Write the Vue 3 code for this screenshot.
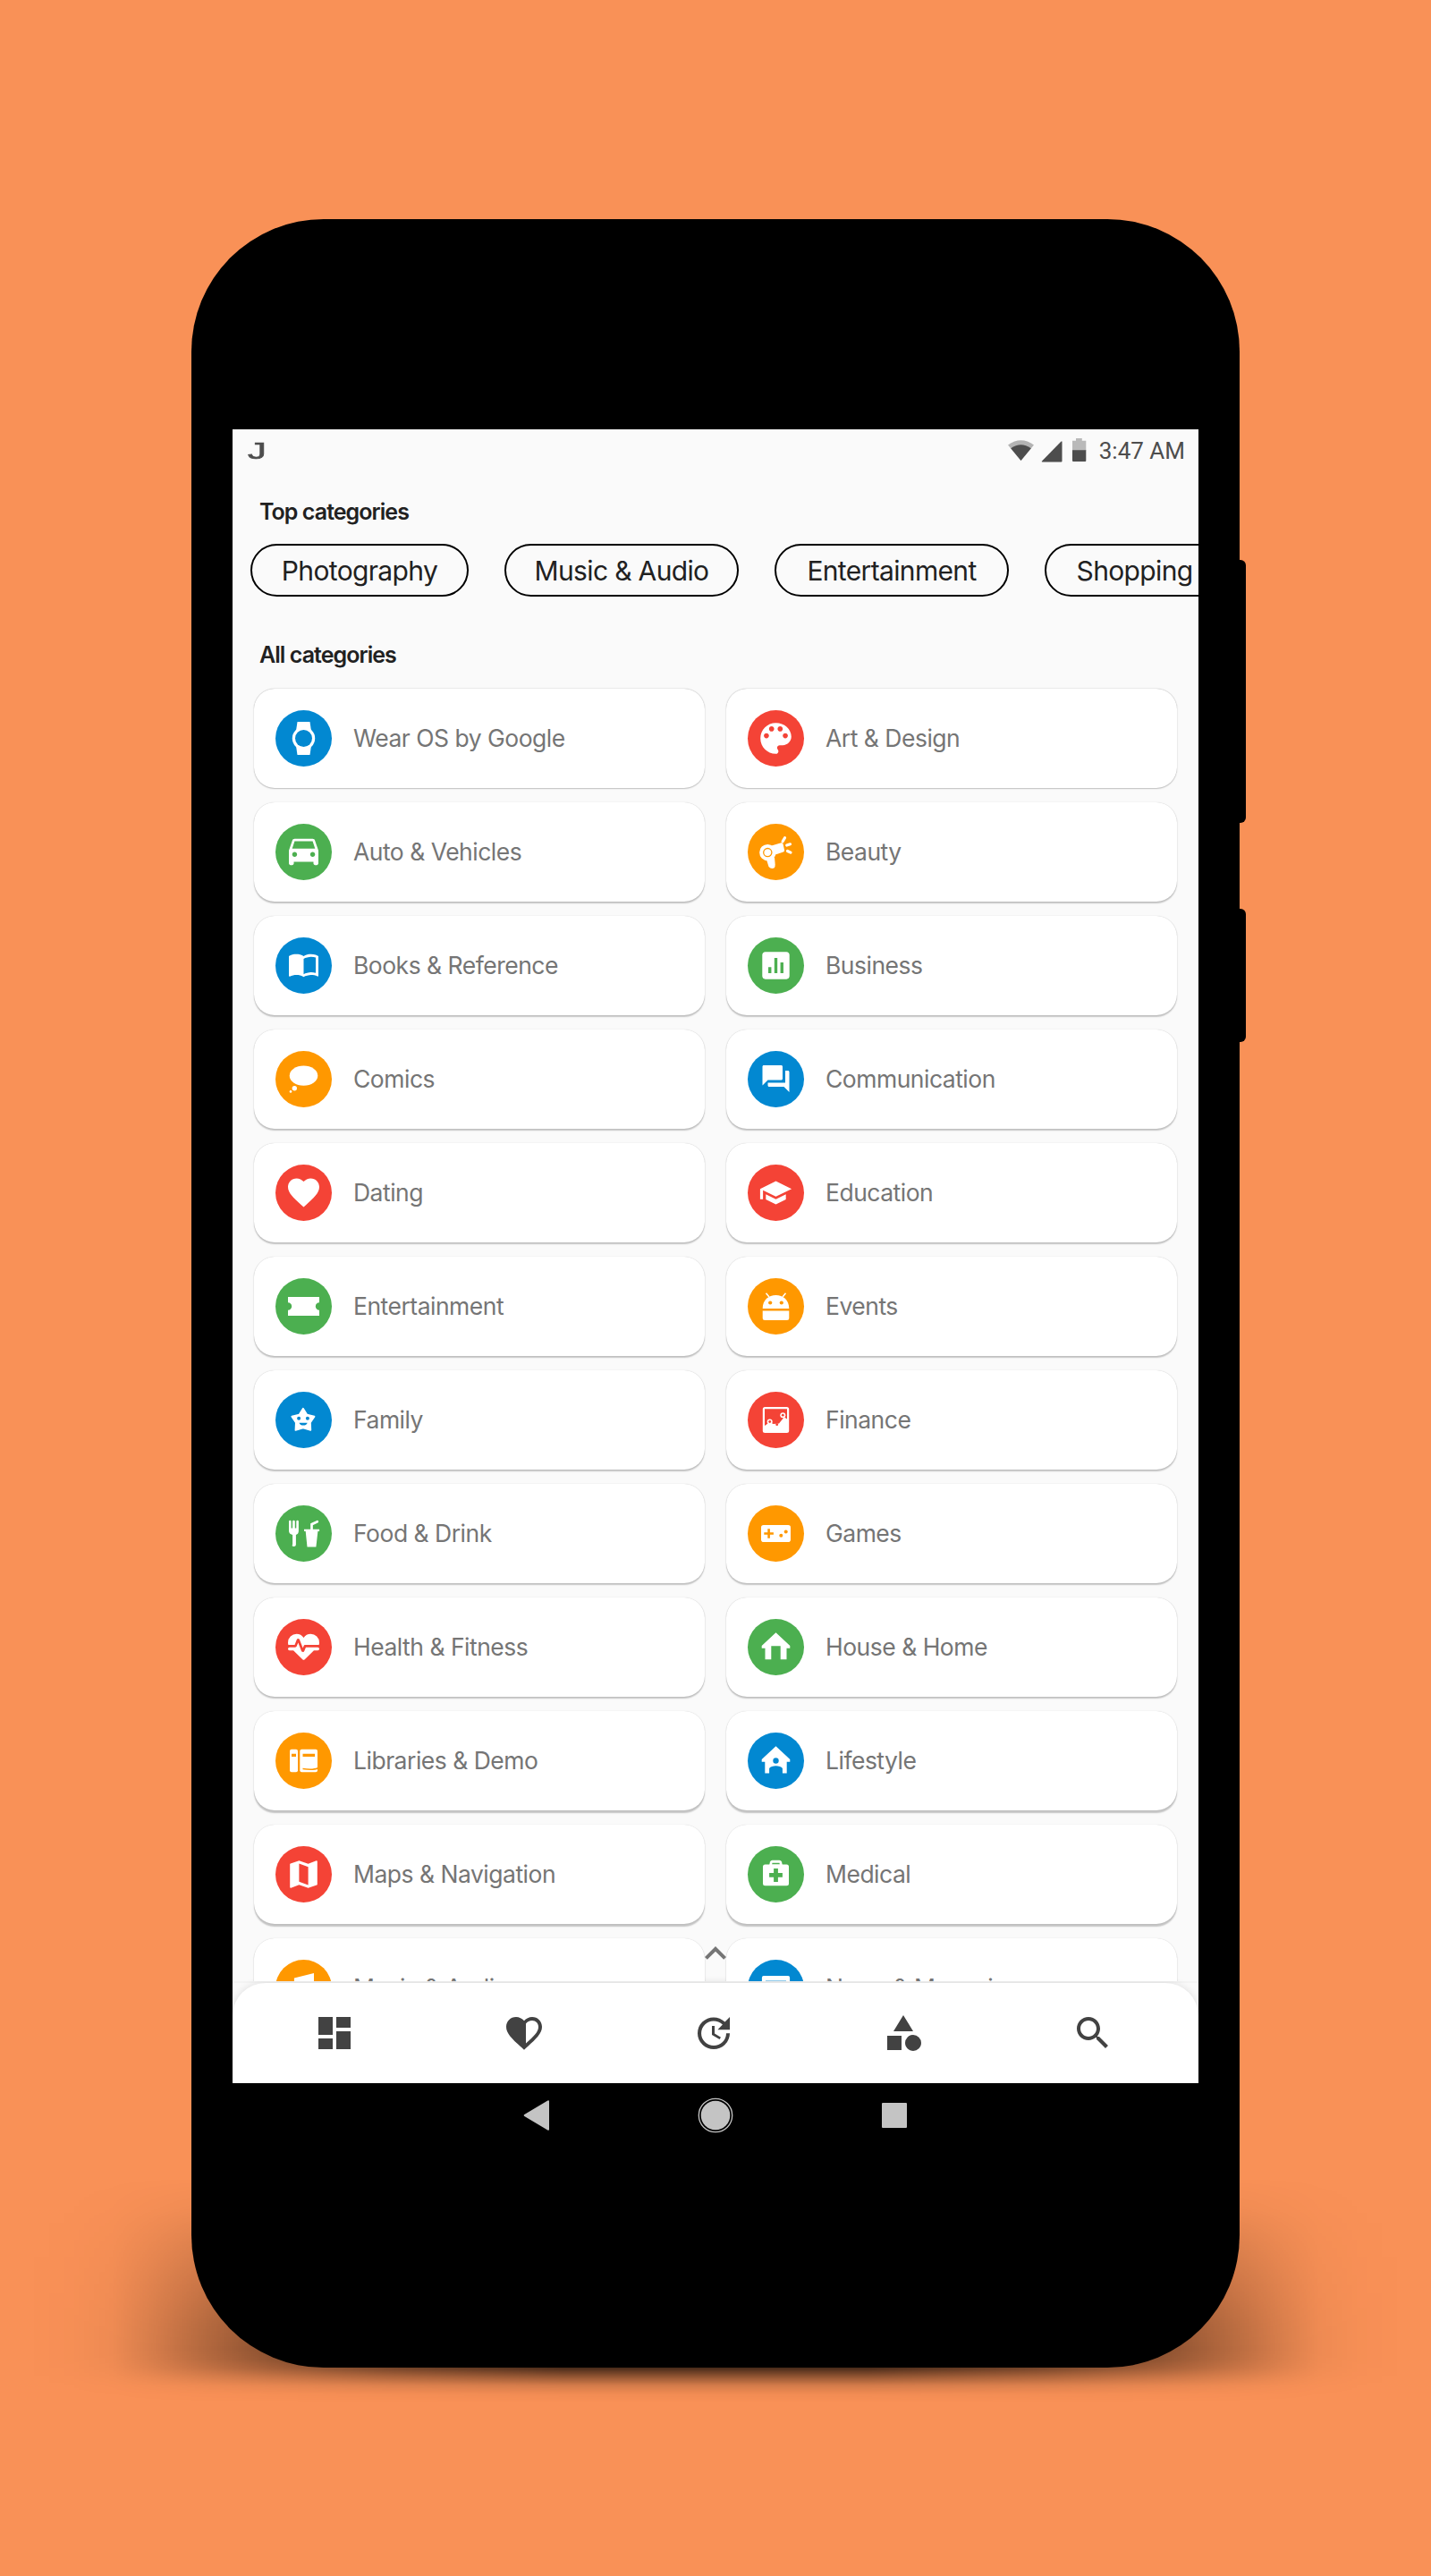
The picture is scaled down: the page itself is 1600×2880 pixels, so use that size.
<script setup>
const BLUE = '#0288d1'
const RED = '#f44336'
const GREEN = '#4caf50'
const ORANGE = '#ff9800'

const topCategories = [
  { label: 'Photography', width: 244 },
  { label: 'Music & Audio', width: 262 },
  { label: 'Entertainment', width: 262 },
  { label: 'Shopping', width: 201 },
]

// Glyphs are drawn around (0, 0); currentColor is the badge colour.
const icons = {
  watch:
    '<path d="M-7-18.5H7L8.4-9V9L7 18.5H-7L-8.4 9V-9z"/><circle r="12.7"/><circle r="9.5" fill="currentColor"/>',
  palette:
    '<path transform="scale(1.92) translate(-12 -12)" d="M12 3c-4.970 0-9 4.030-9 9s4.030 9 9 9c.83 0 1.500-.67 1.500-1.500 0-.39-.15-.74-.39-1.010-.23-.26-.38-.61-.38-.99 0-.83.67-1.500 1.500-1.500H16c2.760 0 5-2.240 5-5 0-4.420-4.030-8-9-8zm-5.500 9c-.83 0-1.500-.67-1.500-1.500S5.670 9 6.500 9 8 9.670 8 10.500 7.330 12 6.500 12zm3-4C8.670 8 8 7.330 8 6.500S8.670 5 9.500 5s1.500.67 1.500 1.500S10.330 8 9.500 8zm5 0c-.83 0-1.500-.67-1.500-1.500S13.670 5 14.500 5s1.500.67 1.500 1.500S15.330 8 14.500 8zm3 4c-.83 0-1.500-.67-1.500-1.500S16.670 9 17.500 9s1.500.67 1.500 1.500-.67 1.500-1.500 1.500z"/>',
  car:
    '<path transform="scale(1.83) translate(-12 -13)" d="M18.92 6.01C18.72 5.42 18.16 5 17.5 5h-11c-.66 0-1.21.42-1.42 1.01L3 12v8c0 .55.45 1 1 1h1c.55 0 1-.45 1-1v-1h12v1c0 .55.45 1 1 1h1c.55 0 1-.45 1-1v-8l-2.080-5.990zM6.500 16c-.83 0-1.500-.67-1.500-1.500S5.670 13 6.500 13s1.500.67 1.500 1.500S7.330 16 6.500 16zm11 0c-.83 0-1.500-.67-1.500-1.500s.67-1.500 1.500-1.500 1.500.67 1.500 1.500-.67 1.500-1.500 1.500zM5 11l1.500-4.500h11L19 11H5z"/>',
  dryer:
    '<circle cx="-9.200" cy="0.600" r="9.200"/><path d="M-5-7L6-10.300q1.500-.3 2 1.200L9.600-2q.2 1.500-1.200 1.900L-2 3.500z"/><path d="M-11 7L-8 16.500q2.500 2.800 6 1.500q1.400-1.500 1.200-4L-1.500 6z"/><circle cx="-9.200" cy="0.600" r="4.600" fill="none" stroke="currentColor" stroke-width="1.300"/><path d="M7.600-11.800L10-15.800M12.200-7.500L16-8.700M13-1L16.500.6" fill="none" stroke="#fff" stroke-width="3.200" stroke-linecap="round"/>',
  book:
    '<path transform="scale(1.5) translate(-12 -13)" d="M21 5c-1.110-.35-2.330-.5-3.500-.5-1.950 0-4.050.4-5.500 1.500-1.450-1.100-3.550-1.500-5.500-1.500S2.450 4.900 1 6v14.650c0 .25.25.5.5.5.1 0 .15-.05.25-.05C3.100 20.450 5.050 20 6.500 20c1.950 0 4.050.4 5.500 1.500 1.350-.85 3.800-1.500 5.500-1.500 1.650 0 3.350.3 4.750 1.050.1.050.15.050.25.050.25 0 .5-.25.5-.5V6c-.6-.45-1.250-.75-2-1zm0 13.500c-1.100-.35-2.300-.5-3.500-.5-1.700 0-4.150.65-5.500 1.500V8c1.350-.85 3.800-1.500 5.500-1.500 1.200 0 2.400.15 3.500.5v11.500z"/>',
  chart:
    '<path transform="scale(1.69) translate(-12 -12)" d="M19 3H5c-1.100 0-2 .9-2 2v14c0 1.100.9 2 2 2h14c1.100 0 2-.9 2-2V5c0-1.100-.9-2-2-2zM9 17H7v-4h2v4zm4 0h-2V7h2v10zm4 0h-2v-7h2v7z"/>',
  thought:
    '<ellipse cy="-3.900" rx="15.800" ry="11.200"/><circle cx="-10.200" cy="10.200" r="2.700"/><circle cx="-14.500" cy="13.900" r="1.300"/>',
  forum:
    '<path transform="scale(1.5) translate(-12 -12.300)" d="M21 6h-2v9H6v2c0 .55.45 1 1 1h11l4 4V7c0-.55-.45-1-1-1zm-4 6V3c0-.55-.45-1-1-1H3c-.55 0-1 .45-1 1v14l4-4h10c.55 0 1-.45 1-1z"/>',
  heart:
    '<path transform="scale(1.75) translate(-12 -12.200)" d="M12 21.350l-1.450-1.320C5.400 15.360 2 12.280 2 8.500 2 5.420 4.420 3 7.500 3c1.740 0 3.410.81 4.500 2.090C13.090 3.810 14.760 3 16.500 3 19.580 3 22 5.420 22 8.500c0 3.780-3.400 6.860-8.550 11.540L12 21.350z"/>',
  school:
    '<path transform="scale(-1.600 1.450) translate(-12 -12)" d="M5 13.180v4L12 21l7-3.820v-4L12 17l-7-3.820zM12 3L1 9l11 6 9-4.910V17h2V9L12 3z"/>',
  ticket:
    '<path d="M-17.500-10.600H17.500V-4.200A4.200 4.200 0 0 0 17.500 4.200V10.600H-17.500V4.200A4.200 4.200 0 0 0-17.500-4.200z"/>',
  robot:
    '<path d="M-14.800 2.400C-14.800-7.500-8-12.600 0-12.600S14.800-7.500 14.800 2.400zM-14.800 4.900H14.800V13q0 2.500-2.500 2.500H-12.300q-2.500 0-2.500-2.500z"/><path d="M-7.500-10.500L-11-14.800M7.500-10.500L11-14.800" stroke="#fff" stroke-width="1.500"/><circle cx="-6.300" cy="-4" r="2.100" fill="currentColor"/><circle cx="6.300" cy="-4" r="2.100" fill="currentColor"/>',
  star:
    '<path d="M-.6-12.800L3.800-5.800 12-3.800 7.400 2.900 7.800 11.400-.6 9-9 11.400-8.600 2.900-13.200-3.800-5-5.800z" stroke="#fff" stroke-width="1.800" stroke-linejoin="round"/><circle cx="-5.400" cy="-1.800" r="2" fill="currentColor"/><circle cx="4.400" cy="-1.800" r="2" fill="currentColor"/><path d="M-5 3.200H4.200C3 7-3.800 7-5 3.200z" fill="currentColor"/>',
  finance:
    '<rect x="-14.700" y="-14.500" width="29.400" height="29" rx="2.500"/><path d="M-12.500-12.300H12.500V-1L9.300-3.200 3.500 4-3 4.500-6.800 2.600-12.500 6.500z" fill="currentColor"/><circle cx="-6.800" cy="2" r="3"/><circle cx="7.800" cy="-5.300" r="3"/><circle cx="-6.800" cy="2" r="1.400" fill="currentColor"/><circle cx="7.800" cy="-5.300" r="1.400" fill="currentColor"/><circle cx="1.200" cy="5.200" r="1.400" fill="currentColor"/>',
  food:
    '<path d="M-16.500-13.400q0-1.300 1.300-1.300t1.300 1.300V-6h1.500V-13.400q0-1.300 1.350-1.300t1.350 1.300V-6h1.500V-13.400q0-1.300 1.300-1.300t1.300 1.300V-3q0 3.500-3 4.500V12q0 2.500-2.500 2.500T-12.400 12V1.500q-4.100-1-4.100-4.500zM.5-4.800H17.600V-2.400H15.900L13.900 15H4L2.200-2.400H.5z"/><path d="M9-4V-10.300L15.300-13.300" fill="none" stroke="#fff" stroke-width="2.700" stroke-linecap="round"/>',
  gamepad:
    '<rect x="-16.500" y="-9.600" width="33" height="19.200" rx="2.800"/><path d="M-13.200 0H-2.600M-7.900-5.300V5.300" stroke="currentColor" stroke-width="2.600"/><circle cx="5.800" cy="2.300" r="2" fill="currentColor"/><circle cx="11.200" cy="-2" r="2" fill="currentColor"/>',
  pulse:
    '<path transform="scale(1.75) translate(-12 -12.400)" d="M7.500,4A5.500,5.500 0 0,0 2,9.500C2,10 2.090,10.500 2.220,11H6.300L7.570,7.630C7.870,6.830 9.050,6.750 9.430,7.630L11.500,13L12.090,11.580C12.220,11.250 12.570,11 13,11H21.780C21.910,10.500 22,10 22,9.500A5.500,5.500 0 0,0 16.500,4C14.640,4 13,4.930 12,6.340C11,4.930 9.360,4 7.500,4V4M3,12.500A1,1 0 0,0 2,13.500A1,1 0 0,0 3,14.500H5.440L11,20C12,20.900 12,20.900 13,20L18.560,14.500H21A1,1 0 0,0 22,13.500A1,1 0 0,0 21,12.500H13.400L12.470,14.800C12.070,15.810 10.920,15.670 10.550,14.830L8.500,9.500L7.540,11.830C7.390,12.210 7.050,12.500 6.600,12.500H3Z"/>',
  house:
    '<path d="M0-16.200L15.800-1.500V1.300H12V13.700H5.200V-1.200H-5.200V13.700H-12V1.300H-15.800V-1.500z"/>',
  books:
    '<rect x="-15.500" y="-12.700" width="9" height="25.400" rx="2"/><rect x="-4.200" y="-12.700" width="19.700" height="25.400" rx="2"/><path d="M-13.500-7.800h5v3.300h-5zM-1-7.800H12.600v3.300H-1zM-1 8.300C6 9.300 12 9.300 15.500 7.500V9.500C12 10.800 5 10.600-1 9.800z" fill="currentColor"/>',
  homePerson:
    '<path d="M0-16.200L15.800-1.500V1.300H12.200V13.900H7.400V8.500C5 4.800-5 4.800-7.400 8.500V13.900H-12.200V1.300H-15.800V-1.500z"/><circle cy="0" r="3.200" fill="currentColor"/>',
  map:
    '<path transform="scale(1.700) translate(-12 -12)" d="M20.500 3l-.16.03L15 5.100 9 3 3.360 4.900c-.21.070-.36.25-.36.48V20.500c0 .28.22.5.5.5l.16-.03L9 18.900l6 2.100 5.640-1.900c.21-.07.36-.25.36-.48V3.500c0-.28-.22-.5-.5-.5zM15 19l-6-2.110V5l6 2.110V19z"/>',
  medical:
    '<rect x="-14.500" y="-11" width="29" height="23.700" rx="2.500"/><path d="M-7.300-10.500L-6.500-14Q-5.800-15.800-4-15.800H4Q5.800-15.800 6.500-14L7.300-10.500z"/><path d="M-4-12.800H4L4.300-11.300H-4.300zM-7.400-1.500h5V-6.600H2.400V-1.500h5V3.300h-5V8.400H-2.400V3.300h-5z" fill="currentColor"/>',
  music: '<path d="M-10.600-11L11.500-16.500V10H5V-6L-4-3V14H-10.600z"/>',
  news:
    '<rect x="-15.600" y="-13.500" width="31.200" height="27" rx="2"/><path d="M-11.500-8.500h23v1.500h-23z" fill="currentColor" opacity=".45"/>',
}

const categories = [
  ['Wear OS by Google', BLUE, 'watch'],
  ['Art & Design', RED, 'palette'],
  ['Auto & Vehicles', GREEN, 'car'],
  ['Beauty', ORANGE, 'dryer'],
  ['Books & Reference', BLUE, 'book'],
  ['Business', GREEN, 'chart'],
  ['Comics', ORANGE, 'thought'],
  ['Communication', BLUE, 'forum'],
  ['Dating', RED, 'heart'],
  ['Education', RED, 'school'],
  ['Entertainment', GREEN, 'ticket'],
  ['Events', ORANGE, 'robot'],
  ['Family', BLUE, 'star'],
  ['Finance', RED, 'finance'],
  ['Food & Drink', GREEN, 'food'],
  ['Games', ORANGE, 'gamepad'],
  ['Health & Fitness', RED, 'pulse'],
  ['House & Home', GREEN, 'house'],
  ['Libraries & Demo', ORANGE, 'books'],
  ['Lifestyle', BLUE, 'homePerson'],
  ['Maps & Navigation', RED, 'map'],
  ['Medical', GREEN, 'medical'],
  ['Music & Audio', ORANGE, 'music'],
  ['News & Magazines', BLUE, 'news'],
].map(([label, color, icon]) => ({ label, color, icon }))

// Shadows lengthen towards the bottom of the screen.
function elevation(index) {
  const row = Math.floor(index / 2)
  const y = (0.9 + row * 0.13).toFixed(2)
  return { boxShadow: `0 0 1px rgba(0,0,0,.22), 0 ${y}px 1.5px rgba(0,0,0,.22)` }
}

const tabs = [
  { name: 'dashboard', d: 'M3 13h8V3H3v10zm0 8h8v-6H3v6zm10 0h8V11h-8v10zm0-18v6h8V3h-8z' },
  {
    name: 'favorites',
    d: 'M16.500 3c-1.740 0-3.410.81-4.500 2.090C10.910 3.810 9.240 3 7.500 3 4.420 3 2 5.420 2 8.500c0 3.780 3.400 6.860 8.550 11.540L12 21.350l1.450-1.320C18.600 15.360 22 12.280 22 8.500 22 5.420 19.580 3 16.500 3zM13 17.700V6.800c.8-1.100 2-1.800 3.500-1.800 2 0 3.500 1.500 3.500 3.500 0 2.900-2.700 5.500-7 9.200z',
  },
  {
    name: 'updates',
    d: 'M21 10.120h-6.780l2.740-2.820c-2.730-2.700-7.150-2.800-9.880-.1-2.730 2.710-2.730 7.080 0 9.790s7.150 2.710 9.880 0C18.320 15.650 19 14.080 19 12.100h2c0 1.980-.88 4.550-2.640 6.290-3.510 3.480-9.210 3.480-12.720 0-3.500-3.470-3.530-9.110-.02-12.580s9.140-3.470 12.650 0L21 3v7.120zM12.500 8v4.250l3.500 2.080-.72 1.210L11 13V8h1.500z',
  },
  {
    name: 'categories',
    d: 'M12 2l-5.500 9h11L12 2zM17.500 13a4.500 4.500 0 1 0 0 9 4.500 4.500 0 0 0 0-9zM3 13.500h8v8H3z',
  },
  {
    name: 'search',
    d: 'M15.500 14h-.79l-.28-.27C15.410 12.590 16 11.110 16 9.500 16 5.910 13.090 3 9.500 3S3 5.910 3 9.500 5.910 16 9.500 16c1.610 0 3.090-.59 4.230-1.570l.27.28v.79l5 4.990L20.490 19l-4.990-5zm-6 0C7.010 14 5 11.990 5 9.500S7.010 5 9.500 5 14 7.010 14 9.500 11.990 14 9.500 14z',
  },
]
</script>

<template>
  <div class="stage">
    <div class="ground-shadow"></div>
    <div class="key power"></div>
    <div class="key volume"></div>

    <div class="phone">
      <div class="screen">
        <header class="status">
          <span class="notice">J</span>
          <svg class="indicators" width="92" height="32" viewBox="0 0 92 32">
            <path d="M0 9.500Q14.500-1 29 9.500L14.500 27z" fill="#b3b3b3" />
            <path d="M3.200 13.200Q14.500 5.500 25.800 13.200L14.500 27z" fill="#4d4d4d" />
            <path d="M60.500 5.500V27.500q0 1-1 1H38.500q-1.300 0-.5-1L59.500 5.500z" fill="#4d4d4d" />
            <path d="M76 2h6.800v2.700H87.300V16H72V4.700h4z" fill="#b9b9b9" />
            <path d="M72 15.300H87.300V27q0 1-1 1H73q-1 0-1-1z" fill="#4d4d4d" />
          </svg>
          <span class="clock">3:47 AM</span>
        </header>

        <main class="content">
          <h2 class="title top">Top categories</h2>
          <div class="chips">
            <span
              v-for="chip in topCategories"
              :key="chip.label"
              class="chip"
              :style="{ width: chip.width + 'px' }"
              >{{ chip.label }}</span
            >
          </div>

          <h2 class="title all">All categories</h2>
          <div class="grid">
            <div
              v-for="(item, i) in categories"
              :key="item.label"
              class="card"
              :style="elevation(i)"
            >
              <svg
                class="badge"
                viewBox="-31.5 -31.5 63 63"
                :style="{ color: item.color, backgroundColor: item.color }"
                fill="#fff"
                v-html="icons[item.icon]"
              ></svg>
              <span class="label">{{ item.label }}</span>
            </div>
          </div>

          <svg class="chevron" viewBox="0 0 24 24">
            <path d="M12 8l-6 6 1.410 1.410L12 10.830l4.590 4.580L18 14z" />
          </svg>
        </main>

        <div class="nav-area">
          <nav class="nav">
            <span v-for="tab in tabs" :key="tab.name" class="tab">
              <svg viewBox="0 0 24 24"><path :d="tab.d" fill-rule="evenodd" /></svg>
            </span>
          </nav>
        </div>
      </div>

      <div class="softkeys">
        <svg width="30" height="34" viewBox="0 0 30 34">
          <path d="M29 1.500V32.500L3 17z" stroke-width="2.500" />
        </svg>
        <svg width="40" height="40" viewBox="0 0 40 40">
          <circle cx="20" cy="20" r="18.700" class="ring" />
          <circle cx="20" cy="20" r="16.300" stroke="none" />
        </svg>
        <svg width="28" height="28" viewBox="0 0 28 28">
          <rect x="1" y="1" width="26" height="26" stroke-width="2" />
        </svg>
      </div>
    </div>
  </div>
</template>

<style>
body {
  margin: 0;
}
</style>

<style scoped>
.stage {
  position: relative;
  display: flex;
  justify-content: center;
  box-sizing: border-box;
  width: 1600px;
  height: 2880px;
  padding-top: 245px;
  overflow: hidden;
  background: #f99157;
  font-family: Inter, Roboto, 'Liberation Sans', sans-serif;
}
.ground-shadow {
  position: absolute;
  left: 30px;
  top: 2430px;
  width: 1540px;
  height: 256px;
  background: linear-gradient(
    90deg,
    transparent 0,
    rgba(0, 0, 0, 0.01) 50px,
    rgba(0, 0, 0, 0.045) 95px,
    rgba(0, 0, 0, 0.13) 135px,
    rgba(0, 0, 0, 0.24) 180px,
    rgba(0, 0, 0, 0.44) 270px,
    rgba(0, 0, 0, 0.68) 400px,
    rgba(0, 0, 0, 0.92) 600px,
    rgba(0, 0, 0, 0.92) 940px,
    rgba(0, 0, 0, 0.68) 1140px,
    rgba(0, 0, 0, 0.44) 1270px,
    rgba(0, 0, 0, 0.24) 1360px,
    rgba(0, 0, 0, 0.13) 1405px,
    rgba(0, 0, 0, 0.045) 1445px,
    rgba(0, 0, 0, 0.01) 1490px,
    transparent 1540px
  );
  mask-image: linear-gradient(
    180deg,
    transparent 5px,
    rgba(0, 0, 0, 0.14) 40px,
    rgba(0, 0, 0, 0.42) 80px,
    rgba(0, 0, 0, 0.7) 125px,
    rgba(0, 0, 0, 0.94) 170px,
    #000 196px,
    rgba(0, 0, 0, 0.93) 208px,
    rgba(0, 0, 0, 0.75) 218px,
    rgba(0, 0, 0, 0.45) 227px,
    rgba(0, 0, 0, 0.16) 237px,
    rgba(0, 0, 0, 0.03) 247px,
    transparent 256px
  );
}
.key {
  position: absolute;
  left: 1370px;
  width: 23px;
  border-radius: 0 6px 6px 0;
  background: #000;
}
.power {
  top: 626px;
  height: 294px;
}
.volume {
  top: 1016px;
  height: 149px;
}
.phone {
  position: relative;
  display: flex;
  flex-direction: column;
  align-items: center;
  box-sizing: border-box;
  width: 1172px;
  height: 2402px;
  padding-top: 235px;
  border-radius: 148px;
  background: #000;
}
.screen {
  display: flex;
  flex-direction: column;
  width: 1080px;
  height: 1849px;
  overflow: hidden;
  background: #fafafa;
}
.status {
  display: flex;
  align-items: center;
  flex: none;
  height: 48px;
  padding: 0 15px 0 17px;
  color: #4d4d4d;
}
.notice {
  width: 18px;
  font: 400 26px/48px 'Liberation Sans', sans-serif;
  -webkit-text-stroke: 0.6px #4d4d4d;
  transform: scaleX(1.6);
  transform-origin: left;
}
.indicators {
  margin-left: auto;
}
.clock {
  margin-left: 10px;
  font: 400 26px/48px Roboto, sans-serif;
  white-space: nowrap;
}
.content {
  position: relative;
  flex: 1;
  min-height: 0;
  overflow: hidden;
}
.title {
  margin: 0;
  padding-left: 30px;
  color: #212121;
  font-size: 25px;
  font-weight: 600;
  letter-spacing: -0.95px;
}
.top {
  padding-top: 8px;
  line-height: 72px;
}
.all {
  margin-top: 27px;
  line-height: 76px;
}
.chips {
  display: flex;
  gap: 40px;
  padding-left: 20px;
}
.chip {
  flex: none;
  box-sizing: border-box;
  height: 59px;
  border: 2px solid #000;
  border-radius: 30px;
  color: #212121;
  font-size: 30px;
  line-height: 56px;
  letter-spacing: -0.65px;
  text-align: center;
}
.grid {
  display: grid;
  grid-template-columns: 504px 504px;
  gap: 16px 24px;
  padding-left: 24px;
}
.card {
  display: flex;
  align-items: center;
  box-sizing: border-box;
  height: 111px;
  padding-left: 24px;
  border-radius: 23px;
  background: #fff;
}
.badge {
  flex: none;
  width: 63px;
  height: 63px;
  border-radius: 50%;
}
.label {
  margin-left: 24px;
  padding-bottom: 2px;
  color: #757575;
  font-size: 26.5px;
  letter-spacing: -0.5px;
  white-space: nowrap;
}
.chevron {
  position: absolute;
  left: 516px;
  bottom: 7px;
  width: 48px;
  height: 48px;
  fill: #757575;
}
.nav-area {
  flex: none;
  height: 114px;
  padding-top: 2px;
  box-sizing: border-box;
  box-shadow: inset 0 2px 0 #f4f4f4;
}
.nav {
  display: flex;
  box-sizing: border-box;
  height: 112px;
  padding: 0 12px 0 8px;
  border-radius: 37px 37px 0 0;
  background: #fff;
  box-shadow: 0 0 10px rgba(0, 0, 0, 0.12);
}
.tab {
  display: flex;
  flex: 1;
  align-items: center;
  justify-content: center;
}
.tab svg {
  width: 48px;
  height: 48px;
  fill: #424242;
}
.softkeys {
  display: flex;
  align-items: center;
  justify-content: space-between;
  width: 430px;
  height: 71px;
  margin-right: 2px;
}
.softkeys svg {
  fill: #c4c4c4;
  stroke: #c4c4c4;
  stroke-linejoin: round;
}
.softkeys .ring {
  fill: none;
  stroke-width: 1.3;
}
</style>
